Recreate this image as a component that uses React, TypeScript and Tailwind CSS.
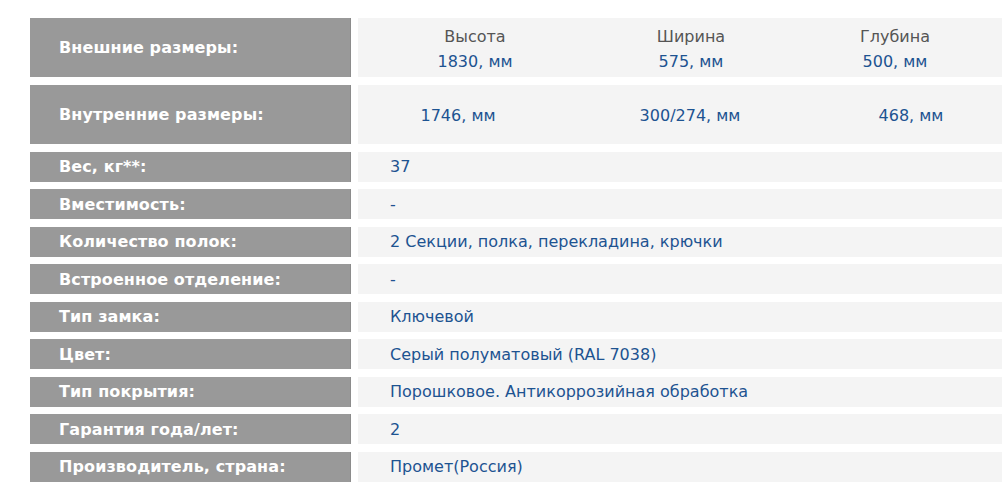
const rows: [string, string][] = [
  ["Вес, кг**:", "37"],
  ["Вместимость:", "-"],
  ["Количество полок:", "2 Секции, полка, перекладина, крючки"],
  ["Встроенное отделение:", "-"],
  ["Тип замка:", "Ключевой"],
  ["Цвет:", "Серый полуматовый (RAL 7038)"],
  ["Тип покрытия:", "Порошковое. Антикоррозийная обработка"],
  ["Гарантия года/лет:", "2"],
  ["Производитель, страна:", "Промет(Россия)"],
];

const font = { fontFamily: '"DejaVu Sans", Verdana, sans-serif' };

function Label({ text, tall }: { text: string; tall?: boolean }) {
  return (
    <div
      className={`flex w-[321px] shrink-0 items-center border-r border-[#8c8c8c] bg-[#999999] pt-[1px] pl-[29px] text-[16px] font-bold tracking-[0.1px] text-white ${
        tall ? "h-[59px]" : "h-[30px]"
      }`}
    >
      {text}
    </div>
  );
}

export default function App() {
  return (
    <div className="min-h-[500px] w-[1002px] overflow-hidden bg-white pt-[18px] pl-[30px]" style={font}>
      <div className="flex flex-col gap-[7.5px]">
        <div className="flex gap-[7px]">
          <Label text="Внешние размеры:" tall />
          <div className="flex h-[59px] w-[700px] items-center bg-[#f4f4f4] pt-[3px] text-[16px] leading-[25px]">
            <div className="flex w-[234px] flex-col items-center">
              <span className="text-[#555555]">Высота</span>
              <span className="text-[#1d5391]">1830, мм</span>
            </div>
            <div className="flex w-[198px] flex-col items-center">
              <span className="text-[#555555]">Ширина</span>
              <span className="text-[#1d5391]">575, мм</span>
            </div>
            <div className="flex w-[210px] flex-col items-center">
              <span className="text-[#555555]">Глубина</span>
              <span className="text-[#1d5391]">500, мм</span>
            </div>
          </div>
        </div>
        <div className="mt-[0.5px] flex gap-[7px]">
          <Label text="Внутренние размеры:" tall />
          <div className="flex h-[59px] w-[700px] items-center bg-[#f4f4f4] pt-[3px] text-[16px] text-[#1d5391]">
            <div className="w-[200px] text-center">1746, мм</div>
            <div className="w-[264px] text-center">300/274, мм</div>
            <div className="w-[178px] text-center">468, мм</div>
          </div>
        </div>
        {rows.map(([label, value]) => (
          <div key={label} className="flex gap-[7px]">
            <Label text={label} />
            <div className="flex h-[30px] w-[700px] items-center bg-[#f4f4f4] pt-[1px] pl-[32px] text-[16px] text-[#1d5391]">
              {value}
            </div>
          </div>
        ))}
      </div>
    </div>
  );
}
